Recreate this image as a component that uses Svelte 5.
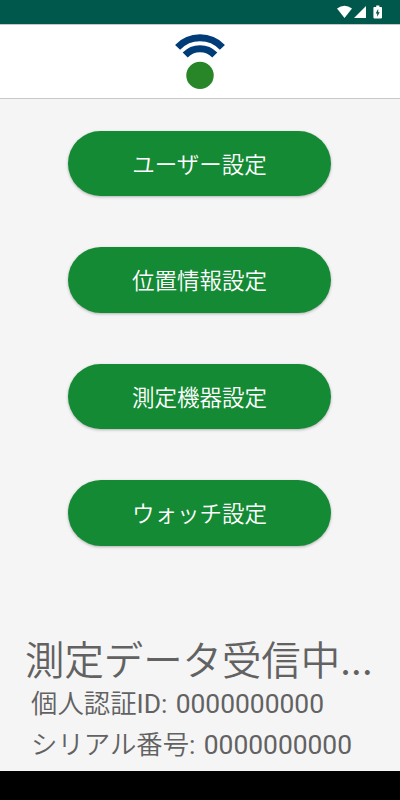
<script>
let buttons = ["ユーザー設定", "位置情報設定", "測定機器設定", "ウォッチ設定"]

let userId = $state("0000000000")
let serial = $state("0000000000")
</script>

<div class="screen">
    <div class="status">
        <svg width="50" height="24" viewBox="0 0 50 24">
            <path d="M1 8.5 Q8.5 2.9 16 8.5 L8.5 18 Z" fill="#fff" />
            <path d="M30 6 V18 H18 Z" fill="#fff" />
            <path d="M38.2 7 H40.2 V5.5 H43.4 V7 H45.2 Q46 7 46 7.8 V17.6 Q46 18.4 45.2 18.4 H38.2 Q37.4 18.4 37.4 17.6 V7.8 Q37.4 7 38.2 7 Z" fill="#fff" />
            <path d="M42.2 8.8 L39.7 13.4 H41.2 V16.8 L43.7 12.2 H42.2 Z" fill="#00574b" />
        </svg>
    </div>
    <header>
        <svg width="60" height="73" viewBox="170 25 60 73">
            <path d="M177.6 47.4 A31 31 0 0 1 222.4 47.4" class="wave" />
            <path d="M185.2 55 A20.5 20.5 0 0 1 214.8 55" class="wave" />
            <circle cx="200" cy="75.4" r="13.7" fill="#288528" />
        </svg>
    </header>
    <main>
        {#each buttons as label}
        <button type="button">{label}</button>
        {/each}
    </main>
    <footer>
        <h1>測定データ受信中<span>...</span></h1>
        <p>個人認証ID: {userId}</p>
        <p>シリアル番号: {serial}</p>
    </footer>
    <div class="nav"></div>
</div>

<style>
:global(body) {
    margin: 0;
}

.screen {
    display: flex;
    flex-direction: column;
    width: 400px;
    height: 800px;
    overflow: hidden;
    background-color: #f5f5f5;
    font-family: Roboto, "Noto Sans CJK JP DemiLight", "Noto Sans CJK JP", sans-serif;
}

.status {
    display: flex;
    justify-content: flex-end;
    height: 24px;
    padding-right: 14px;
    background-color: #00574b;
}

header {
    display: flex;
    justify-content: center;
    box-sizing: border-box;
    height: 75px;
    border-top: 1px solid #c4c9c8;
    border-bottom: 1px solid #c8c8c8;
    background-color: #fff;
}

.wave {
    fill: none;
    stroke: #003c78;
    stroke-width: 7;
}

main {
    display: flex;
    flex-direction: column;
    align-items: center;
    gap: 51px;
    padding: 31.6px 1px 0 0;
}

button {
    width: 263px;
    height: 65.5px;
    padding: 0 0 1px;
    border: none;
    border-radius: 33px;
    background-color: #148a34;
    box-shadow: 0 1px 3px rgba(0, 0, 0, 0.28);
    color: #fff;
    font-family: inherit;
    font-size: 22.5px;
}

footer {
    flex: 1;
    padding: 91px 0 0 25px;
    color: #626262;
}

h1 {
    margin: 0;
    font-size: 39.4px;
    font-weight: 400;
    line-height: 50px;
    white-space: nowrap;
}

h1 span {
    font-family: "Noto Sans CJK JP DemiLight", "Noto Sans CJK JP", sans-serif;
    letter-spacing: 0.4px;
    line-height: 1px;
}

p {
    margin: 0 0 0 6px;
    font-size: 26.4px;
    line-height: 41px;
    word-spacing: 1.7px;
    white-space: nowrap;
}

p:first-of-type {
    margin-top: -2.5px;
}

.nav {
    height: 29px;
    background-color: #000;
}
</style>
